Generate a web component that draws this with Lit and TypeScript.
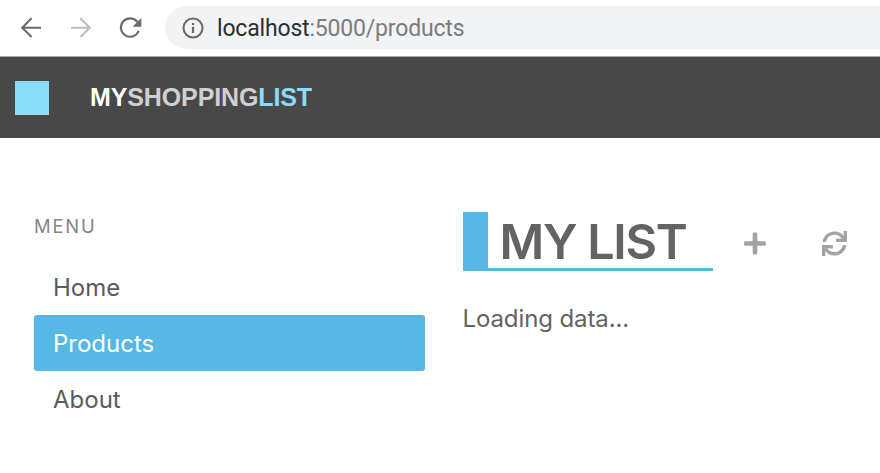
import { LitElement, html, css } from "lit";
import { customElement, state } from "lit/decorators.js";
import { classMap } from "lit/directives/class-map.js";

@customElement("browser-bar")
class BrowserBar extends LitElement {
  static styles = css`
    :host {
      display: flex;
      box-sizing: border-box;
      height: 57px;
      padding-top: 6px;
      background: #fff;
      border-bottom: 1px solid #a9a9a9;
    }
    .nav {
      display: block;
      width: 165px;
      height: 44px;
      flex: none;
    }
    .line {
      fill: none;
      stroke: #6b6b6b;
      stroke-width: 2.1;
    }
    .muted {
      stroke: #bdbdbd;
    }
    .solid {
      fill: #6b6b6b;
    }
    .address {
      flex: 1;
      display: flex;
      align-items: center;
      height: 43px;
      background: #f2f3f5;
      border-radius: 22px 0 0 22px;
    }
    .info {
      display: block;
      width: 22px;
      height: 22px;
      margin-left: 17px;
    }
    .url {
      margin-left: 13px;
      padding-top: 2px;
      font: 23px/30px Roboto, sans-serif;
      letter-spacing: -0.18px;
      color: #7b7c7e;
      white-space: nowrap;
    }
    .host {
      color: #2d2f32;
    }
  `;

  render() {
    return html`
      <svg class="nav" viewBox="0 6 165 44">
        <path class="line" d="M41 27.7H22.5M31.6 18.3L22.2 27.7L31.6 37.1" />
        <path class="line muted" d="M71 27.7H89.5M80.4 18.3L89.8 27.7L80.4 37.1" />
        <path class="line" d="M137.6 22.2A9.2 9.2 0 1 0 138.7 30.8" />
        <path class="solid" d="M141.3 18V26.7H132.6Z" />
      </svg>
      <div class="address">
        <svg class="info" viewBox="0 0 22 22">
          <circle class="line" cx="11" cy="11" r="9.5" />
          <path class="solid" d="M9.9 5.9h2.2v2.2H9.9zM9.9 9.8h2.2v6.3H9.9z" />
        </svg>
        <div class="url"><span class="host">localhost</span>:5000/products</div>
      </div>
    `;
  }
}

@customElement("app-header")
class AppHeader extends LitElement {
  static styles = css`
    :host {
      display: flex;
      align-items: center;
      height: 81px;
      background: #484848;
      padding-left: 15px;
    }
    .mark {
      width: 34px;
      height: 34px;
      background: #8adcf9;
    }
    .name {
      margin-left: 41px;
      padding-bottom: 2px;
      font: bold 25px/30px "Liberation Sans", Arial, sans-serif;
      letter-spacing: -0.12px;
      color: #d0d0d0;
      white-space: nowrap;
    }
    .my {
      color: #fff;
    }
    .list {
      color: #8adcf9;
    }
  `;

  render() {
    return html`
      <div class="mark"></div>
      <div class="name"><span class="my">MY</span><span>SHOPPING</span><span class="list">LIST</span></div>
    `;
  }
}

@customElement("side-menu")
class SideMenu extends LitElement {
  @state() private active = "Products";
  private items = ["Home", "Products", "About"];

  static styles = css`
    :host {
      display: block;
      width: 391px;
      font-family: Inter, sans-serif;
    }
    .label {
      margin-top: 2px;
      height: 24px;
      font-size: 18.4px;
      line-height: 24px;
      letter-spacing: 1.8px;
      color: #858585;
    }
    .items {
      margin-top: 21px;
    }
    .item {
      box-sizing: border-box;
      height: 56px;
      padding-left: 19px;
      border-radius: 3px;
      font-size: 24px;
      line-height: 58px;
      color: #5a5a5a;
      cursor: pointer;
    }
    .active {
      background: #57b8e6;
      color: #fff;
    }
  `;

  render() {
    return html`
      <div class="label">MENU</div>
      <div class="items">
        ${this.items.map(
          (name) => html`<div
            class=${classMap({ item: true, active: name === this.active })}
            @click=${() => (this.active = name)}
          >${name}</div>`
        )}
      </div>
    `;
  }
}

@customElement("product-list")
class ProductList extends LitElement {
  static styles = css`
    :host {
      display: block;
      font-family: Inter, sans-serif;
      color: #636363;
    }
    .head {
      display: flex;
      align-items: center;
    }
    .title {
      box-sizing: border-box;
      width: 250px;
      height: 59px;
      padding-left: 12px;
      border-left: 25px solid #57b8e6;
      box-shadow: inset 0 -3px #57b8e6;
      font-size: 48.5px;
      line-height: 60px;
      font-weight: 600;
      letter-spacing: -1.3px;
      white-space: nowrap;
    }
    .plus {
      width: 22px;
      height: 25px;
      margin: 4px 0 0 31px;
      fill: #a3a3a3;
    }
    .sync {
      width: 25px;
      height: 25px;
      margin: 4px 0 0 56px;
      fill: #a3a3a3;
    }
    .status {
      margin-top: 32px;
      font-size: 24px;
      line-height: 32px;
      letter-spacing: -0.1px;
    }
  `;

  render() {
    return html`
      <div class="head">
        <div class="title">MY LIST</div>
        <svg class="plus" viewBox="0 0 448 512">
          <path d="M416 208H272V64c0-17.67-14.33-32-32-32h-32c-17.67 0-32 14.33-32 32v144H32c-17.67 0-32 14.33-32 32v32c0 17.67 14.33 32 32 32h144v144c0 17.67 14.33 32 32 32h32c17.67 0 32-14.33 32-32V304h144c17.67 0 32-14.33 32-32v-32c0-17.67-14.33-32-32-32z" />
        </svg>
        <svg class="sync" viewBox="0 0 512 512">
          <path d="M440.65 12.57l4 82.77A247.16 247.16 0 0 0 255.83 8C134.73 8 33.91 94.92 12.29 209.82A12 12 0 0 0 24.09 224h49.05a12 12 0 0 0 11.67-9.26 175.91 175.91 0 0 1 317-56.94l-101.46-4.86a12 12 0 0 0-12.57 12v47.41a12 12 0 0 0 12 12H500a12 12 0 0 0 12-12V12a12 12 0 0 0-12-12h-47.37a12 12 0 0 0-11.98 12.57zM255.83 432a175.61 175.61 0 0 1-146-77.8l101.8 4.87a12 12 0 0 0 12.57-12v-47.4a12 12 0 0 0-12-12H12a12 12 0 0 0-12 12V500a12 12 0 0 0 12 12h47.35a12 12 0 0 0 12-12.6l-4.15-82.57A247.17 247.17 0 0 0 255.83 504c121.11 0 221.93-86.92 243.55-201.82a12 12 0 0 0-11.8-14.18h-49.05a12 12 0 0 0-11.67 9.26A175.86 175.86 0 0 1 255.83 432z" />
        </svg>
      </div>
      <div class="status">Loading data...</div>
    `;
  }
}

@customElement("app-root")
class AppRoot extends LitElement {
  static styles = css`
    :host {
      display: block;
      height: 473px;
      overflow: hidden;
      background: #fff;
    }
    .content {
      display: flex;
      gap: 37.5px;
      padding: 74px 0 0 34px;
    }
  `;

  render() {
    return html`
      <browser-bar></browser-bar>
      <app-header></app-header>
      <div class="content">
        <side-menu></side-menu>
        <product-list></product-list>
      </div>
    `;
  }
}
